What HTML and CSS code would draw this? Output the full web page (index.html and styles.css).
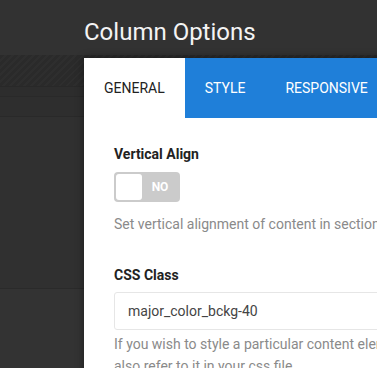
FILE: index.html
```html
<!DOCTYPE html>
<html lang="en">
<head>
    <meta charset="UTF-8">
    <meta name="viewport" content="width=device-width, initial-scale=1.0">
    <title>Column Options</title>
    <link rel="stylesheet" href="styles.css">
</head>
<body>
    <div class="backdrop">
        <div class="bg-header"></div>
        <div class="bg-toolbar"></div>
        <div class="bg-row"></div>
        <div class="bg-row bg-row-tall"></div>
        <div class="bg-area"></div>
        <div class="bg-area bg-area-low"></div>
    </div>

    <div class="modal">
        <h1 class="modal-title">Column Options</h1>
        <div class="panel">
            <div class="tabs">
                <div class="tab active">General</div>
                <div class="tab">Style</div>
                <div class="tab">Responsive</div>
                <div class="tab-fill"></div>
            </div>
            <div class="panel-body">
                <div class="field">
                    <label class="field-label">Vertical Align</label>
                    <div class="toggle">
                        <span class="toggle-knob"></span>
                        <span class="toggle-text">NO</span>
                    </div>
                    <p class="field-help">Set vertical alignment of content in section</p>
                </div>
                <div class="field">
                    <label class="field-label">CSS Class</label>
                    <input type="text" class="text-input" value="major_color_bckg-40">
                    <p class="field-help field-help-tight">If you wish to style a particular content element differently, then add a class<br>also refer to it in your css file.</p>
                </div>
            </div>
        </div>
    </div>
</body>
</html>
```

FILE: styles.css
```css
* {
    box-sizing: border-box;
    margin: 0;
    padding: 0;
}

html, body {
    width: 377px;
    height: 368px;
    overflow: hidden;
}

body {
    font-family: Roboto, "Liberation Sans", Arial, sans-serif;
    background-color: #333333;
    position: relative;
}

/* page behind the modal */
.backdrop {
    display: flex;
    flex-direction: column;
    height: 100%;
}

.bg-header {
    height: 55px;
    background-color: #323232;
}

.bg-toolbar {
    height: 32px;
    background-color: #2a2a2a;
    background-image: repeating-linear-gradient(135deg, #2a2a2a 0, #2a2a2a 3px, #2e2e2e 3px, #2e2e2e 5px);
    border-bottom: 1px solid #282828;
}

.bg-row {
    height: 10px;
    background-color: #2d2d2d;
    border-bottom: 1px solid #292929;
}

.bg-row-tall {
    height: 20px;
    background-color: #2e2e2e;
}

.bg-area {
    height: 172px;
    background-color: #303030;
    border-bottom: 1px solid #2a2a2a;
}

.bg-area-low {
    flex: 1;
    background-color: #333333;
    border-bottom: none;
}

/* modal */
.modal {
    position: absolute;
    top: 18px;
    left: 84px;
    width: 760px;
}

.modal-title {
    font-size: 24px;
    font-weight: 400;
    line-height: 28px;
    color: #f4f4f4;
    margin-bottom: 12px;
}

.panel {
    background-color: white;
    box-shadow: 0 0 8px rgba(0, 0, 0, 0.45);
    height: 400px;
}

.tabs {
    display: flex;
    height: 60px;
}

.tab {
    display: flex;
    align-items: center;
    padding: 0 20px;
    background-color: #1f7fd9;
    color: white;
    font-size: 14px;
    text-transform: uppercase;
}

.tab.active {
    background-color: white;
    color: #222222;
}

.tab-fill {
    flex: 1;
    background-color: #1f7fd9;
}

.panel-body {
    padding: 26px 30px 0;
}

.field + .field {
    margin-top: 30px;
}

.field-label {
    display: block;
    font-size: 14px;
    font-weight: 700;
    line-height: 20px;
    color: #222222;
}

.toggle {
    display: flex;
    align-items: center;
    width: 66px;
    height: 30px;
    margin-top: 8px;
    padding: 2px;
    background-color: #cbcbcb;
    border-radius: 4px;
}

.toggle-knob {
    width: 26px;
    height: 26px;
    background-color: white;
    border-radius: 3px;
}

.toggle-text {
    flex: 1;
    text-align: center;
    color: white;
    font-size: 12px;
    font-weight: 700;
}

.field-help {
    margin-top: 11px;
    font-size: 14px;
    line-height: 22px;
    color: #8a8a8a;
    white-space: nowrap;
}

.field-help-tight {
    margin-top: 3px;
}

.text-input {
    display: block;
    width: 100%;
    height: 38px;
    margin-top: 7px;
    padding: 0 13px;
    border: 1px solid #e6e6e6;
    border-radius: 3px;
    font-family: inherit;
    font-size: 14px;
    color: #444444;
    background-color: white;
}
```
